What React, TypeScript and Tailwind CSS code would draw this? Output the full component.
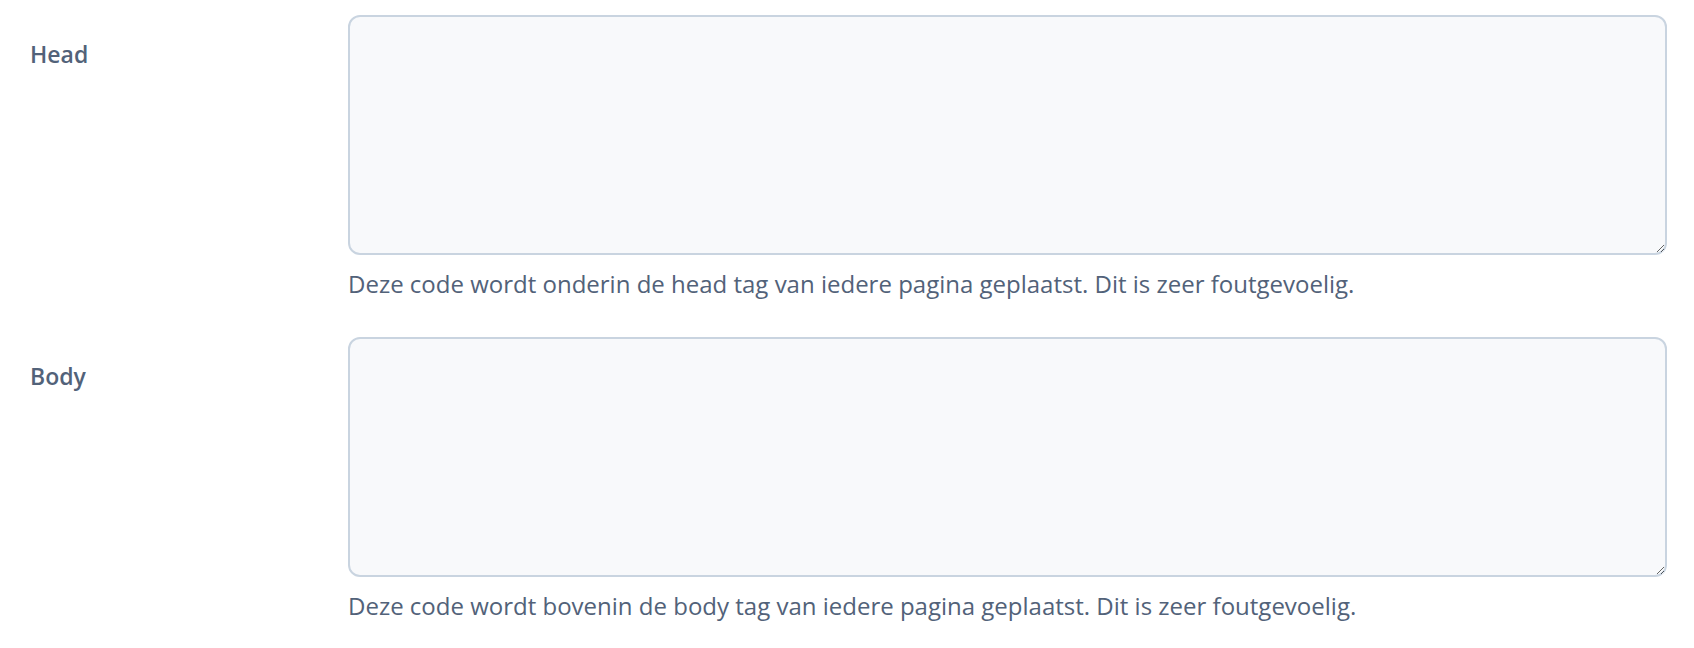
export default function App() {
  const fields = [
    { label: 'Head', help: 'Deze code wordt onderin de head tag van iedere pagina geplaatst. Dit is zeer foutgevoelig.' },
    { label: 'Body', help: 'Deze code wordt bovenin de body tag van iedere pagina geplaatst. Dit is zeer foutgevoelig.' },
  ];

  return (
    <div className="min-h-screen w-full bg-white pt-[15px] pl-[30px] pr-[27px]" style={{ fontFamily: '"Open Sans", "Noto Sans", sans-serif' }}>
      <div className="flex flex-col gap-[37px]">
        {fields.map(f => (
          <div key={f.label} className="flex">
            <div className="w-[318px] shrink-0 pt-[24px]">
              <label className="text-[23px] leading-[30px] font-semibold text-[#526279]">{f.label}</label>
            </div>
            <div className="flex-1 flex flex-col">
              <textarea
                className="h-[240px] w-full rounded-[12px] border-2 border-[#c9d4e0] bg-[#f8f9fb] outline-none"
              />
              <p className="mt-[13px] text-[24px] leading-[32px] text-[#526279]">{f.help}</p>
            </div>
          </div>
        ))}
      </div>
    </div>
  );
}
